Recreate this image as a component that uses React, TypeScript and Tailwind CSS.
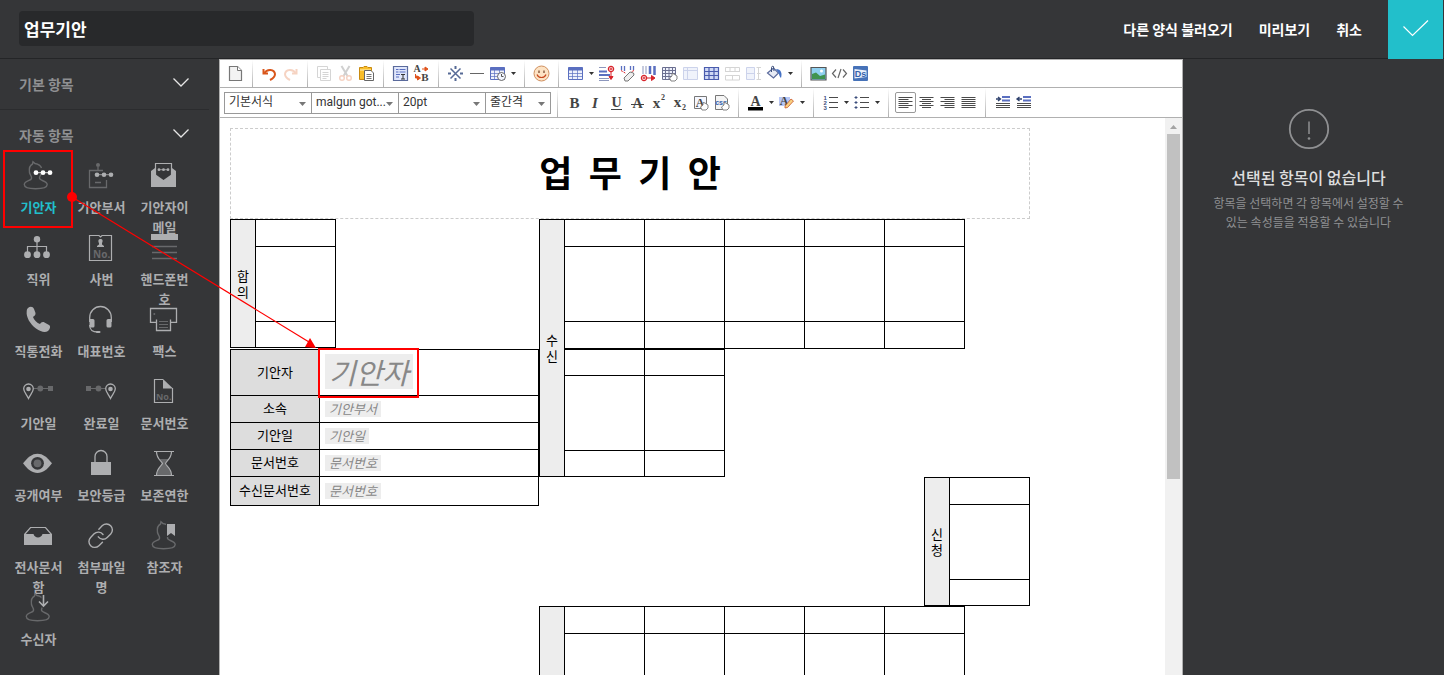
import { type ReactNode } from 'react';

const L = '#adaeb0';
const D = '#68696b';
const BG = '#353638';

/* ---------- sidebar icons (49 x 36 box) ---------- */

function Person({ dx = 0 }: { dx?: number }) {
  return (
    <path
      transform={`translate(${dx} 0)`}
      d="M27.500 11C26.500 8 24 7 21 6.500L19 4.800L18.500 7C15.500 8.500 15 12 15.500 15.500C16 18 18 19 17.500 21.500C17 24 10.500 23.500 10.300 27.500C10.300 30.500 15 31.700 21.500 31.700C28 31.700 33.200 30.500 33.200 27.500C33 23.500 25.500 24 25.500 21C25.500 19.500 26.500 18.500 27 17"
      fill="none"
      stroke={D}
      strokeWidth="1.400"
    />
  );
}

function Dots({ xs, y, r, color }: { xs: number[]; y: number; r: number; color: string }) {
  return (
    <g fill={color} stroke={color}>
      <path d={`M${xs[0]} ${y}H${xs[2]}`} strokeWidth=".8" />
      {xs.map((x) => (
        <circle key={x} cx={x} cy={y} r={r} stroke="none" />
      ))}
    </g>
  );
}

function Pin({ cx }: { cx: number }) {
  return (
    <g transform={`translate(${cx} 16)`}>
      <path d="M0 9.500C-2 5.500-4.800 3-4.800-.200A4.800 4.800 0 0 1 4.800-.200C4.800 3 2 5.500 0 9.500Z" fill="none" stroke={L} strokeWidth="1.300" />
      <circle r="2.300" fill={L} />
    </g>
  );
}

const glyphs: Record<string, ReactNode> = {
  drafter: (
    <>
      <Person />
      <Dots xs={[22, 29, 36]} y={15.7} r={2.4} color="#ffffff" />
    </>
  ),
  dept: (
    <>
      <circle cx="21" cy="8" r="2" fill={D} />
      <path d="M21 10V13M26 13.500H12.500V30.500H29.500V23M18 25.500H24" fill="none" stroke={D} strokeWidth="1.300" />
      <Dots xs={[20, 27, 34]} y={17.7} r={2.3} color={L} />
    </>
  ),
  mail: (
    <>
      <path d="M15.500 18V6.500H31.500V18" fill="none" stroke={L} strokeWidth="1.200" />
      <path d="M11 14L15 11V17L23.500 23L32 17V11L36 14V30H11Z" fill={L} />
      <Dots xs={[19, 23.5, 28]} y={12.7} r={1.4} color={L} />
    </>
  ),
  org: (
    <>
      <path d="M23 10V25M13.500 25V17.500H32.500V25" fill="none" stroke={L} strokeWidth="1.200" />
      <g fill={L}>
        <circle cx="23" cy="10.300" r="3.200" />
        <circle cx="13.500" cy="25.700" r="3.400" />
        <circle cx="23" cy="25.700" r="3.400" />
        <circle cx="32.500" cy="25.700" r="3.400" />
      </g>
    </>
  ),
  badge: (
    <>
      <path d="M12.500 6.500H22L23.500 8L25 6.500H34.500V31.500H12.500Z" fill="none" stroke={L} strokeWidth="1.200" />
      <path d="M23.500 10C26 10 26 12.500 25 14V15.500L27 17V18H20V17L22 15.500V14C21 12.500 21 10 23.500 10Z" fill={L} />
      <text x="16" y="29" fontSize="10" fill={D} fontFamily="Noto Sans">No.</text>
    </>
  ),
  mobile: (
    <>
      <path d="M11 5H38V11H11Z" fill={L} />
      <path d="M12 17.500H37M12 23.500H37M12 29.500H37" stroke={D} strokeWidth="1.400" />
    </>
  ),
  phone: (
    <path
      d="M14 7C16 5 19 5.200 20 8L21.500 12C22 14 20 15 19 16C20 19 23 22 26 23C27 21.500 28.500 20.500 30.500 21.500L35 24C37 25.500 36 28 34 30C31 32 27 31 22 27.500C16 23 12 16 12.700 10.500C12.800 9 13 8 14 7Z"
      fill={L}
    />
  ),
  headset: (
    <>
      <path d="M12.700 21V16.500A10.800 11 0 0 1 34.300 16.500V21M12.700 24C12.700 29 15 31 21 31" fill="none" stroke={L} strokeWidth="1.300" />
      <path d="M12.500 18H16Q17.500 18 17.500 19.500V25Q17.500 26.500 16 26.500H14Q12.500 26.500 12.500 25ZM34.500 18H31Q29.500 18 29.500 19.500V25Q29.500 26.500 31 26.500H33Q34.500 26.500 34.500 25Z" fill={L} />
      <rect x="19" y="30" width="4.500" height="2" rx="1" fill={L} />
    </>
  ),
  fax: (
    <>
      <path d="M16 21.300H10.500V7.500H36.500V21.300H31M16.500 18.500V29.500H30.500V18.500" fill="none" stroke={L} strokeWidth="1.300" />
      <path d="M19 20.500H28M19 23.500H28M19 26.500H28" stroke={D} />
      <circle cx="14.300" cy="13" r="1" fill={D} />
    </>
  ),
  start: (
    <>
      <path d="M20 15.500H36" stroke={D} />
      <circle cx="26.300" cy="15.500" r="2.900" fill={D} />
      <path d="M34 13H39V18H34Z" fill={D} />
      <Pin cx={14.5} />
    </>
  ),
  done: (
    <>
      <path d="M12 15.500H28" stroke={D} />
      <circle cx="21.500" cy="15.500" r="2.900" fill={D} />
      <path d="M9 13H14V18H9Z" fill={D} />
      <Pin cx={33.5} />
    </>
  ),
  doc: (
    <>
      <path d="M23 6.500H14.500V29.500H32.500V15" fill="none" stroke={L} strokeWidth="1.200" />
      <path d="M23 6L33 15.500H23Z" fill={L} />
      <text x="16" y="27" fontSize="9" fill={D} fontFamily="Noto Sans">No.</text>
    </>
  ),
  eye: (
    <>
      <path d="M9 18.300C14 12 18 8.700 23.500 8.700S33 12 38 18.300C33 24.700 29 28 23.500 28S14 24.700 9 18.300Z" fill={L} />
      <circle cx="23.500" cy="18.300" r="6.400" fill={BG} />
      <circle cx="23.500" cy="18.300" r="3.900" fill={D} />
    </>
  ),
  lock: (
    <>
      <path d="M18 17V11.500A6 6 0 0 1 30 11.500V17" fill="none" stroke={L} strokeWidth="1.300" />
      <path d="M14 17H34V30H14Z" fill={L} />
    </>
  ),
  hourglass: (
    <>
      <path d="M19.500 14H28.500L25 18.500C26 21 31 23 31 30H17C17 23 22 21 22.500 18.500Z" fill={D} />
      <path d="M14 6.500H34M14 30.500H34M16.500 6.500C16.500 14 21.500 16 22.500 18.500C21.500 21 16.500 23 16.500 30.500M31.500 6.500C31.500 14 26 16 25.500 18.500C26 21 31.500 23 31.500 30.500" fill="none" stroke={L} strokeWidth="1.200" />
    </>
  ),
  tray: (
    <>
      <path d="M10.500 17.500L16.500 10.500H31.500L37.500 17.500" fill="none" stroke={L} strokeWidth="1.200" />
      <path d="M10 17H19.500C20 19 22 20.500 24 20.500S28 19 28.500 17H38V28H10Z" fill={L} />
    </>
  ),
  link: (
    <g transform="translate(9.500 4.500) scale(1.180)" fill="none" stroke={L} strokeWidth="1.200" strokeLinecap="round">
      <path d="M10 13a5 5 0 0 0 7.540.540l3-3a5 5 0 0 0-7.070-7.070l-3 3" />
      <path d="M14 11a5 5 0 0 0-7.540-.540l-3 3a5 5 0 0 0 7.070 7.070l3-3" />
    </g>
  ),
  refer: (
    <>
      <Person dx={2} />
      <path d="M26 5H36V20H26Z" fill={BG} />
      <path d="M27 7H35V19L31 16L27 19Z" fill={L} />
    </>
  ),
  receive: (
    <>
      <Person dx={2} />
      <path d="M29.500 6V16M25 12.500L29.500 17L34 12.500" fill="none" stroke={BG} strokeWidth="4" />
      <path d="M29.500 6V16M25 12.500L29.500 17L34 12.500" fill="none" stroke={L} strokeWidth="1.600" />
    </>
  ),
};

const items: [string, string][] = [
  ['drafter', '기안자'],
  ['dept', '기안부서'],
  ['mail', '기안자이메일'],
  ['org', '직위'],
  ['badge', '사번'],
  ['mobile', '핸드폰번호'],
  ['phone', '직통전화'],
  ['headset', '대표번호'],
  ['fax', '팩스'],
  ['start', '기안일'],
  ['done', '완료일'],
  ['doc', '문서번호'],
  ['eye', '공개여부'],
  ['lock', '보안등급'],
  ['hourglass', '보존연한'],
  ['tray', '전사문서함'],
  ['link', '첨부파일명'],
  ['refer', '참조자'],
  ['receive', '수신자'],
];

function SectionButton({ title }: { title: string }) {
  return (
    <button type="button" className="flex h-[50px] w-full items-center justify-between pr-[19px] pl-[19px] text-sm font-bold text-[#8f9092]">
      <span>{title}</span>
      <svg className="mb-0.5" width="18" height="12" viewBox="0 0 18 12" fill="none" stroke="#e6e6e6" strokeWidth="1.300">
        <path d="M1.500 1.500L9 9L16.500 1.500" />
      </svg>
    </button>
  );
}

function Sidebar() {
  return (
    <aside className="w-[219px] shrink-0">
      <div className="mr-2.5 border-b border-[#2b2c2e]">
        <SectionButton title="기본 항목" />
      </div>
      <div className="mr-2.5">
        <SectionButton title="자동 항목" />
      </div>
      <ul className="-mt-[3px] ml-[7px] grid w-[189px] grid-cols-3">
        {items.map(([id, label], i) => (
          <li key={id} className="h-[72px]">
            <button
              type="button"
              className={`flex w-full flex-col items-center px-1 text-[13px] leading-5 font-bold break-all ${i === 0 ? 'text-[#22bfcb]' : 'text-[#adaeb0]'}`}
            >
              <svg width="49" height="36" viewBox="0 0 49 36" aria-hidden="true">
                {glyphs[id]}
              </svg>
              <span className="mt-1">{label}</span>
            </button>
          </li>
        ))}
      </ul>
    </aside>
  );
}

/* ---------- toolbar ---------- */

const B1 = '#5a6fc0';
const B2 = '#cfd8f5';
const G = '#4a4a4a';

function Tool({ label, children, boxed, faded }: { label: string; children: ReactNode; boxed?: boolean; faded?: boolean }) {
  return (
    <button
      type="button"
      aria-label={label}
      className={`flex h-[21px] w-[21px] shrink-0 items-center justify-center ${boxed ? 'rounded-xs border border-[#999]' : ''} ${faded ? 'opacity-30' : ''}`}
    >
      <svg className="shrink-0" width="17" height="17" viewBox="0 0 17 17" fill="none">
        {children}
      </svg>
    </button>
  );
}

function Caret({ label }: { label: string }) {
  return (
    <button type="button" aria-label={label} className="flex h-[21px] w-2.5 shrink-0 items-center justify-center">
      <svg width="5" height="3" viewBox="0 0 5 3">
        <path d="M0 0H5L2.500 3Z" fill="#333" />
      </svg>
    </button>
  );
}

function Sep() {
  return <span className="mx-1.5 h-full w-px shrink-0 bg-linear-to-b from-white to-[#b0b0b0]" />;
}

function Grid({ color = B1, fill = '#eef1fc' }: { color?: string; fill?: string }) {
  return (
    <>
      <path d="M1.500 2.500H15.500V14.500H1.500Z" fill={fill} />
      <path d="M1.500 8.500H15.500M1.500 11.500H15.500M5.500 5V14M10.500 5V14" stroke={color} opacity=".7" />
      <path d="M1.500 2.500H15.500V14.500H1.500Z" stroke={color} />
      <path d="M1.500 4H15.500" stroke={color} strokeWidth="3" />
    </>
  );
}

function Hand() {
  return <path d="M8.500 13L11 11V8.500L13 9L16 11V14L14 16H10Z" fill="#fff" stroke="#777" strokeWidth=".9" />;
}

function Letter({ children, size = 15, x = 8.5, y = 14 }: { children: string; size?: number; x?: number; y?: number }) {
  return (
    <text x={x} y={y} fontSize={size} textAnchor="middle" fontFamily="Liberation Serif" fontWeight="bold" fill="#444">
      {children}
    </text>
  );
}

function Plus({ x, y }: { x: number; y: number }) {
  return (
    <g transform={`translate(${x} ${y})`}>
      <circle r="2.600" fill="#fff" stroke="#d8232a" strokeWidth="1.300" />
      <path d="M-1.500 0H1.500M0-1.500V1.500" stroke="#d8232a" />
    </g>
  );
}

function ToolRowOne() {
  return (
    <div className="flex h-[28px] items-center border-b border-[#b0b0b0] pl-[5px]">
      <Tool label="새 문서">
        <path d="M2.500 1.500H10.500L14.500 5.500V15.500H2.500Z" fill="#f3f3f3" stroke="#777" strokeWidth="1.200" />
        <path d="M10.500 1.500V5.500H14.500" fill="#fff" stroke="#777" />
      </Tool>
      <Sep />
      <Tool label="실행 취소">
        <path d="M2.500 4V8.500H7" stroke="#d9561b" strokeWidth="2" />
        <path d="M3.500 8C6 3.500 13.500 4 14 9C14 12 12 13.500 9 15" stroke="#d9561b" strokeWidth="2" />
      </Tool>
      <Tool label="다시 실행" faded>
        <g transform="translate(17 0) scale(-1 1)">
          <path d="M2.500 4V8.500H7" stroke="#e2703a" strokeWidth="2" />
          <path d="M3.500 8C6 3.500 13.500 4 14 9C14 12 12 13.500 9 15" stroke="#e2703a" strokeWidth="2" />
        </g>
      </Tool>
      <Sep />
      <Tool label="복사" faded>
        <path d="M1.500 1.500H11.500V12.500H1.500Z" fill="#fff" stroke="#777" />
        <path d="M4.500 4.500H14.500V15.500H4.500Z" fill="#fff" stroke="#777" />
        <path d="M6.500 7.500H12.500M6.500 9.500H12.500M6.500 11.500H12.500M6.500 13.500H10.500" stroke="#777" />
      </Tool>
      <Tool label="잘라내기" faded>
        <path d="M4.500 1L10.500 11M12.500 1L6.500 11" stroke="#666" strokeWidth="2" />
        <circle cx="5" cy="13" r="2.300" stroke="#e07040" strokeWidth="1.500" />
        <circle cx="12" cy="13" r="2.300" stroke="#e07040" strokeWidth="1.500" />
      </Tool>
      <Tool label="붙여넣기">
        <path d="M1.500 2.500H5L6 1.500H9L10 2.500H13.500V14.500H1.500Z" fill="#f8bd2a" stroke="#c98a10" />
        <path d="M2 5H13" stroke="#ffe28a" strokeWidth="1.500" />
        <path d="M6.500 5.500H13L15.500 8V15.500H6.500Z" fill="#fff" stroke="#666" />
        <path d="M8.500 9.500H13.500M8.500 11.500H13.500M8.500 13.500H13.500" stroke="#777" />
      </Tool>
      <Sep />
      <Tool label="모두 선택">
        <path d="M1.500 1.500H15.500V15.500H1.500Z" fill="#dfe6fb" stroke="#5a6a9c" strokeWidth="1.200" />
        <path d="M4 4.500H6.500M7.500 4.500H13.500M4 7H6.500M7.500 7H13.500M4 9.500H8M4 12H7" stroke={B1} strokeWidth="1.200" />
        <path d="M9 9.500H13M11 9.500V14M9 14H13" stroke="#333" />
      </Tool>
      <Tool label="찾아 바꾸기">
        <Letter size={10} x={4} y={7}>A</Letter>
        <Letter size={11} x={12} y={16}>B</Letter>
        <path d="M9 4H13M12 2V6L15 4ZM2.500 9V13H5M4.500 11V15L7.500 13Z" stroke="#e0521a" fill="#e0521a" />
      </Tool>
      <Sep />
      <Tool label="특수문자">
        <path d="M3.500 3.500L13.500 13.500M13.500 3.500L3.500 13.500" stroke="#566a96" strokeWidth="1.500" />
        <path d="M8.500 1V4M8.500 13V16M1 8.500H4M13 8.500H16" stroke="#566a96" strokeWidth="2" />
      </Tool>
      <Tool label="가로줄">
        <path d="M2 8.500H16" stroke="#666" />
      </Tool>
      <Tool label="날짜와 시간">
        <Grid />
        <circle cx="12.500" cy="11.500" r="4" fill="#f2f5ff" stroke="#666" />
        <path d="M12.500 9V11.500H14.500" stroke="#555" />
      </Tool>
      <Caret label="날짜 옵션" />
      <Sep />
      <Tool label="이모티콘">
        <circle cx="8.500" cy="8.500" r="7.500" fill="#fde3c4" stroke="#d09060" />
        <path d="M6 5.500V8M11 5.500V8" stroke="#7a4a30" strokeWidth="1.300" />
        <path d="M4 9.500C5.500 13.500 11.500 13.500 13 9.500" stroke="#c8481e" strokeWidth="1.200" />
      </Tool>
      <Sep />
      <Tool label="표 삽입"><Grid /></Tool>
      <Caret label="표 옵션" />
      <Tool label="행 삽입">
        <path d="M1 2.500H8M1 13.500H11M1 15.500H11" stroke="#8d97bd" />
        <path d="M1 6.500H9M1 10H12" stroke={B1} strokeWidth="2" />
        <path d="M13 7V14M11 11.500L13 14.500L15 11.500Z" stroke="#d8232a" fill="#d8232a" />
        <Plus x={13} y={4} />
      </Tool>
      <Tool label="표 지우기">
        <path d="M2.500 1V5M5.500 1V6M11.500 1V5M14.500 1V5" stroke={B1} strokeWidth="1.300" />
        <path d="M2 5.500L7 8.500M15 5.500L12 7" stroke="#d8232a" strokeDasharray="2 1" />
        <path d="M5 13L11 7L14.500 8L15 10L9 16H6Z" fill="#eee" stroke="#777" />
      </Tool>
      <Tool label="열 삽입">
        <path d="M3 1V9M6 1V9" stroke="#8d97bd" />
        <path d="M10 1V9M14.500 1V10" stroke={B1} strokeWidth="2.500" />
        <path d="M6 13H13M11.500 10.500L15 13L11.500 15.500Z" stroke="#d8232a" fill="#d8232a" />
        <Plus x={4} y={13} />
      </Tool>
      <Tool label="표 속성">
        <path d="M1.500 2.500H14.500V14.500H1.500ZM1.500 5.500H14.500M1.500 8.500H14.500M1.500 11.500H14.500M4.500 2.500V14.500M8 2.500V14.500M11.500 2.500V14.500" fill="#eef1fc" stroke="#6b6f90" />
        <Hand />
      </Tool>
      <Tool label="셀 속성" faded>
        <path d="M1.500 2.500H15.500V14.500H1.500ZM5.500 2.500V14.500M1.500 5.500H15.500" fill={B2} stroke={B1} />
      </Tool>
      <Tool label="셀 선택">
        <path d="M1.500 2.500H15.500V14.500H1.500Z" fill={B2} stroke="#4a5cae" strokeWidth="1.200" />
        <path d="M1.500 6.500H15.500M1.500 10.500H15.500M6 2.500V14.500M11 2.500V14.500" stroke="#4a5cae" strokeWidth="1.200" />
      </Tool>
      <Tool label="셀 병합" faded>
        <path d="M1.500 7V2.500H15.500V7M1.500 10.500H15.500V15H1.500ZM6 2.500V6.500M11 2.500V6.500M8.500 10.500V15M1.500 6.500H15.500" stroke="#777" />
      </Tool>
      <Tool label="셀 나누기" faded>
        <path d="M1.500 2.500H9.500V14.500H1.500ZM1.500 8.500H9.500" fill={B2} stroke={B1} />
        <path d="M13.500 2V15M11.500 2.500H16M11.500 14.500H16M12 8.500H15.500" stroke="#777" />
      </Tool>
      <Tool label="배경색">
        <path d="M1.500 8L7.500 3L12.500 8L7.500 13Z" fill="#e7ebf5" stroke="#5a6a9c" strokeWidth="1.200" />
        <path d="M5.500 7V2.500Q6 .500 7.500 1.500L8 6" stroke="#3c4f7c" />
        <path d="M10 4C15 4 16.500 8 15 13C13.500 12 13.500 10 12.500 8Z" fill="#4672c4" />
      </Tool>
      <Caret label="배경색 옵션" />
      <Sep />
      <Tool label="이미지">
        <path d="M1 2.500H16V15H1Z" fill="#8fd0f0" stroke="#555" strokeWidth="1.200" />
        <path d="M2 14V9L6 7.500L10 11L15 9.500V14Z" fill="#3f9350" />
        <circle cx="11.500" cy="6" r="1.500" fill="#fff" />
      </Tool>
      <Tool label="HTML">
        <path d="M5 4.500L1.500 8.500L5 12.500M12 4.500L15.500 8.500L12 12.500M10 4L7 13" stroke="#666" strokeWidth="1.200" />
      </Tool>
      <Tool label="Ds">
        <rect x="1" y="1" width="15" height="15" rx="1" fill="#4672b8" />
        <path d="M2.500 4L14.500 5.500V12L2.500 13.500Z" fill="#eaf0fa" />
        <text x="8.500" y="12" fontSize="9" fontWeight="bold" textAnchor="middle" fontFamily="Liberation Sans" fill="#3461ab">Ds</text>
      </Tool>
    </div>
  );
}

function Drop({ label, value, width }: { label: string; value: string; width: string }) {
  return (
    <div className={`relative -ml-px h-[22px] shrink-0 ${width}`}>
      <select
        aria-label={label}
        defaultValue={value}
        className="block h-full w-full appearance-none border border-[#999] bg-white pr-0 pb-0.5 pl-1 font-['Roboto','Noto_Sans_CJK_KR',sans-serif] text-xs text-[#333]"
      >
        <option>{value}</option>
      </select>
      <svg className="pointer-events-none absolute top-2.5 right-1.5" width="7" height="4" viewBox="0 0 7 4">
        <path d="M0 0H7L3.500 4Z" fill="#777" />
      </svg>
    </div>
  );
}

function ToolRowTwo() {
  return (
    <div className="flex h-[30px] items-center border-b border-[#b0b0b0] pl-[5px]">
      <Drop label="서식" value="기본서식" width="w-[88px]" />
      <Drop label="글꼴" value="malgun got..." width="w-[88px]" />
      <Drop label="글자 크기" value="20pt" width="w-[88px]" />
      <Drop label="줄간격" value="줄간격" width="w-[66px]" />
      <Sep />
      <Tool label="굵게"><Letter>B</Letter></Tool>
      <Tool label="기울임">
        <text x="8" y="14" fontSize="15" textAnchor="middle" fontFamily="Liberation Serif" fontWeight="bold" fontStyle="italic" fill="#444">I</text>
      </Tool>
      <Tool label="밑줄">
        <Letter size={14} y={13}>U</Letter>
        <path d="M3 15.500H14" stroke="#444" />
      </Tool>
      <Tool label="취소선">
        <Letter size={14}>A</Letter>
        <path d="M2 10.500H15" stroke="#444" />
      </Tool>
      <Tool label="위 첨자">
        <Letter size={15} x={6.5} y={14}>x</Letter>
        <Letter size={8} x={13} y={6}>2</Letter>
      </Tool>
      <Tool label="아래 첨자">
        <Letter size={15} x={6.5} y={13}>x</Letter>
        <Letter size={8} x={13} y={16}>2</Letter>
      </Tool>
      <Tool label="글자 속성">
        <path d="M2.500 2.500H14.500V14.500H2.500Z" fill="#f5f7ff" stroke="#777" />
        <Letter size={12} x={8} y={13}>A</Letter>
        <Hand />
      </Tool>
      <Tool label="CSS">
        <path d="M2.500 1.500H11L14.500 5V15.500H2.500Z" fill="#f5f5f5" stroke="#777" />
        <text x="8" y="11" fontSize="7" fontWeight="bold" textAnchor="middle" fontFamily="Liberation Sans" fill="#3461ab">css</text>
        <Hand />
      </Tool>
      <Sep />
      <Tool label="글자색">
        <Letter size={14} y={12}>A</Letter>
        <path d="M1 13H16V16.500H1Z" fill="#000" />
      </Tool>
      <Caret label="글자색 옵션" />
      <Tool label="형광펜">
        <path d="M1 3H12V12H1Z" fill="#b9c8f5" />
        <Letter size={12} x={6} y={11}>A</Letter>
        <path d="M7 12L13 5L15.500 7L9.500 13.500L7 14Z" fill="#f8d080" stroke="#c8562a" strokeWidth=".8" />
      </Tool>
      <Caret label="형광펜 옵션" />
      <Sep />
      <Tool label="번호 목록">
        <path d="M7 3.500H16M7 8.500H16M7 13.500H16" stroke={G} />
        <g fontSize="6" fontFamily="Liberation Sans" fill="#3c4f7c" fontWeight="bold">
          <text x="1.500" y="5.500">1</text>
          <text x="1.500" y="10.500">2</text>
          <text x="1.500" y="16">3</text>
        </g>
      </Tool>
      <Caret label="번호 목록 옵션" />
      <Tool label="글머리 기호">
        <path d="M7 3.500H16M7 8.500H16M7 13.500H16" stroke={G} />
        <path d="M1.500 3.500H4.500M3 2V5M1.500 8.500H4.500M3 7V10M1.500 13.500H4.500M3 12V15" stroke="#3c4f7c" />
      </Tool>
      <Caret label="글머리 기호 옵션" />
      <Sep />
      <Tool label="왼쪽 정렬" boxed>
        <path d="M1.500 3.500H15.500M1.500 5.500H11.500M1.500 7.500H15.500M1.500 9.500H11.500M1.500 11.500H15.500M1.500 13.500H11.500" stroke={G} />
      </Tool>
      <Tool label="가운데 정렬">
        <path d="M1.500 3.500H15.500M4 5.500H13M1.500 7.500H15.500M4 9.500H13M1.500 11.500H15.500M4 13.500H13" stroke={G} />
      </Tool>
      <Tool label="오른쪽 정렬">
        <path d="M1.500 3.500H15.500M5.500 5.500H15.500M1.500 7.500H15.500M5.500 9.500H15.500M1.500 11.500H15.500M5.500 13.500H15.500" stroke={G} />
      </Tool>
      <Tool label="양쪽 정렬">
        <path d="M1.500 3.500H15.500M1.500 5.500H15.500M1.500 7.500H15.500M1.500 9.500H15.500M1.500 11.500H15.500M1.500 13.500H15.500" stroke={G} />
      </Tool>
      <Sep />
      <Tool label="들여쓰기">
        <path d="M8 3H16M8 6.500H16" stroke={B1} strokeWidth="2" />
        <path d="M2 5H6M4 3L6.500 5L4 7" stroke="#2f426e" strokeWidth="1.300" />
        <path d="M2 9.500H16M2 11.500H16M2 13.500H16" stroke={G} />
      </Tool>
      <Tool label="내어쓰기">
        <path d="M8 3H16M8 6.500H16" stroke={B1} strokeWidth="2" />
        <path d="M2.500 5H7M4.500 3L2 5L4.500 7" stroke="#2f426e" strokeWidth="1.300" />
        <path d="M2 9.500H16M2 11.500H16M2 13.500H16" stroke={G} />
      </Tool>
    </div>
  );
}

/* ---------- document ---------- */

function Approval({ title, groups }: { title?: string; groups: number[] }) {
  const last = groups.length - 1;
  return (
    <table className="border-collapse text-[13px] leading-4 text-black">
      <tbody>
        {groups.map((count, g) =>
          [0, 1, 2].map((r) => (
            <tr key={`${g}-${r}`} className={r === 1 ? 'h-[75px]' : r === 2 && g === last ? 'h-[26px]' : 'h-[27px]'}>
              {g === 0 && r === 0 && (
                <th rowSpan={groups.length * 3} className="w-[25px] border border-black bg-[#ededed] px-1 font-normal break-all">
                  {title}
                </th>
              )}
              {Array.from({ length: count }, (_, c) => (
                <td key={c} className={`w-20 min-w-20 border border-black p-0 ${g > 0 && r === 0 ? 'border-t-2' : ''}`} />
              ))}
            </tr>
          )),
        )}
      </tbody>
    </table>
  );
}

const fields: [string, string][] = [
  ['기안자', '기안자'],
  ['소속', '기안부서'],
  ['기안일', '기안일'],
  ['문서번호', '문서번호'],
  ['수신문서번호', '문서번호'],
];

function DocumentBody() {
  return (
    <div className="w-[800px]">
      <h1 className="flex h-[91px] items-center justify-center border border-dashed border-[#ccc] pb-1.5 text-4xl font-bold whitespace-pre text-black">
        업  무  기  안
      </h1>
      <div className="flex items-start">
        <div className="w-[309px] shrink-0">
          <Approval title="합의" groups={[1]} />
          <table className="mt-px w-full table-fixed border-collapse text-[13px] leading-4 text-black">
            <tbody>
              {fields.map(([name, value], i) => (
                <tr key={name} className={i === 0 ? 'h-[46px]' : i === 4 ? 'h-[29px]' : 'h-[27px]'}>
                  <th className="w-[89px] border border-black bg-[#ddd] p-0 pb-0.5 font-normal whitespace-nowrap">{name}</th>
                  <td className="border border-black p-0 pb-0.5 pl-[5px]">
                    <span className={`inline-block bg-[#ededed] px-1 align-middle text-[#888] italic ${i === 0 ? 'text-[29px] leading-[35px]' : ''}`}>
                      {value}
                    </span>
                  </td>
                </tr>
              ))}
            </tbody>
          </table>
        </div>
        <div className="flex-1">
          <Approval title="수신" groups={[5, 2]} />
          <div className="flex justify-end">
            <Approval title="신청" groups={[1]} />
          </div>
          <Approval groups={[5, 2]} />
        </div>
      </div>
    </div>
  );
}

function Editor() {
  return (
    <main className="flex min-w-0 flex-1 flex-col overflow-hidden border-x border-t border-[#b0b0b0] bg-white">
      <ToolRowOne />
      <ToolRowTwo />
      <div className="flex min-h-0 flex-1">
        <div className="min-w-0 flex-1 overflow-hidden p-2.5">
          <DocumentBody />
        </div>
        <div className="w-[17px] shrink-0 bg-[#f1f1f1] px-0.5">
          <svg className="mx-auto h-4" width="7" height="16" viewBox="0 0 7 16">
            <path d="M0 11H7L3.500 7Z" fill="#a3a3a3" />
          </svg>
          <div className="h-[62%] bg-[#c1c1c1]" />
        </div>
      </div>
    </main>
  );
}

function Inspector() {
  return (
    <aside className="w-[261px] shrink-0 pt-[49px] pr-[38px] pl-7 text-center">
      <svg className="mx-auto" width="42" height="42" viewBox="0 0 42 42" fill="none" stroke="#8f9092">
        <circle cx="21" cy="21" r="19.200" strokeWidth="1.800" />
        <path d="M21 13.500V26" strokeWidth="1.500" />
        <circle cx="21" cy="30.500" r="1.300" fill="#8f9092" stroke="none" />
      </svg>
      <p className="mt-[15px] text-base font-medium text-[#dedede]">선택된 항목이 없습니다</p>
      <p className="mt-1 text-xs leading-[19px] break-keep text-[#8f9092]">
        항목을 선택하면 각 항목에서 설정할 수 있는 속성들을 적용할 수 있습니다
      </p>
    </aside>
  );
}

function Callout() {
  return (
    <svg className="pointer-events-none absolute top-0 left-0" width="430" height="410" viewBox="0 0 430 410" fill="none" stroke="#ff0000" aria-hidden="true">
      <path d="M4 151H72V227H4Z" strokeWidth="2" />
      <path d="M319 349H418V397H319Z" strokeWidth="2" />
      <path d="M72 197L309 342" strokeWidth="1.200" />
      <circle cx="72" cy="197" r="5" fill="#ff0000" stroke="none" />
      <path d="M316 348L305 347L310 338Z" fill="#ff0000" stroke="none" />
    </svg>
  );
}

export default function App() {
  return (
    <div className="relative flex h-screen flex-col overflow-hidden bg-[#353638] font-['Noto_Sans_CJK_KR',sans-serif]">
      <header className="flex h-[59px] shrink-0 items-center border-b border-[#242527] pl-[19px] text-sm font-medium text-white">
        <input
          aria-label="양식 제목"
          defaultValue="업무기안"
          className="-mt-0.5 h-[35px] w-[455px] rounded bg-[#28292b] px-[5px] text-[17px] font-bold text-white outline-none"
        />
        <nav className="ml-auto flex items-center gap-[26px] font-bold">
          <button type="button">다른 양식 불러오기</button>
          <button type="button">미리보기</button>
          <button type="button">취소</button>
        </nav>
        <button type="button" aria-label="저장" className="ml-[26px] flex h-[59px] w-[55px] items-center justify-center bg-[#22bfcb]">
          <svg width="28" height="20" viewBox="0 0 28 20" fill="none" stroke="#fff" strokeWidth="1.200">
            <path d="M1.500 7.500L10.500 16.500L26 1.500" />
          </svg>
        </button>
        <span className="w-px" />
      </header>
      <div className="flex min-h-0 flex-1">
        <Sidebar />
        <Editor />
        <Inspector />
      </div>
      <Callout />
    </div>
  );
}
